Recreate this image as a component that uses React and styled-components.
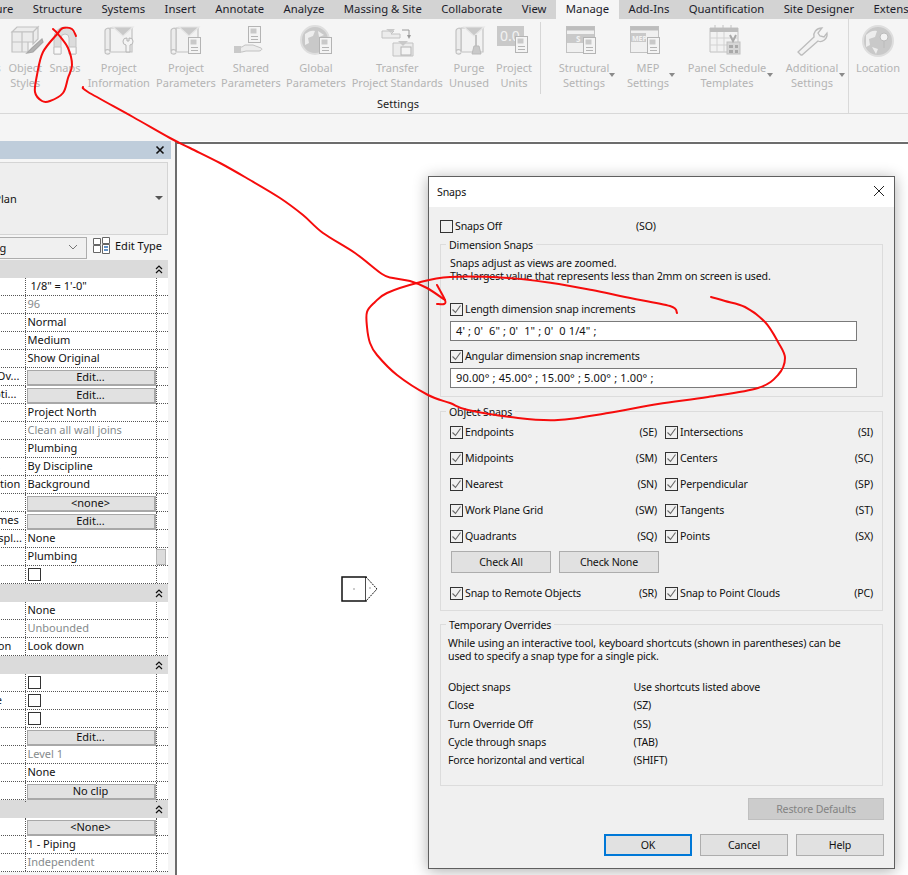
import React from 'react'
import styled, { createGlobalStyle } from 'styled-components'

const GlobalStyle = createGlobalStyle`
  html, body { margin: 0; padding: 0; background: #fff; }
  body {
    font-family: "Noto Sans", "Open Sans", sans-serif;
    font-size: 11px;
    color: #111;
  }
  * { box-sizing: border-box; }
`

const Page = styled.div`
  position: relative;
  width: 908px;
  height: 875px;
  overflow: hidden;
  display: flex;
  flex-direction: column;
`

/* ---------- tabs ---------- */
const TabBar = styled.div`
  height: 19px;
  flex: none;
  display: flex;
  background: #d3d3d3;
  margin-left: -61px;
  white-space: nowrap;
`
const Tab = styled.div`
  padding: 0 9.7px;
  line-height: 17px;
  font-size: 11.3px;
  color: #1c1c2a;
  background: ${(p) => (p.$active ? '#f5f5f5' : 'transparent')};
`

/* ---------- ribbon ---------- */
const Ribbon = styled.div`
  height: 95px;
  flex: none;
  display: flex;
  background: #f5f5f5;
  border-bottom: 1px solid #d8d8d8;
  margin-left: -51px;
`
const RibbonPanel = styled.div`
  width: ${(p) => p.$w}px;
  flex: none;
  display: flex;
  flex-direction: column;
  border-right: ${(p) => (p.$divider ? '1px solid #d9d9d9' : 'none')};
`
const ToolRow = styled.div`
  display: flex;
  height: 76px;
  padding-top: 6px;
`
const PanelTitle = styled.div`
  text-align: center;
  line-height: 14px;
  margin-top: 2px;
  padding-right: 1px;
  color: #222;
`
const Tool = styled.div`
  position: relative;
  width: ${(p) => p.$w}px;
  margin-left: ${(p) => p.$gap || 0}px;
  flex: none;
  display: flex;
  flex-direction: column;
  align-items: center;
  color: #b4b4b4;
  ${(p) => p.$menu && `
    &::after {
      content: '';
      position: absolute;
      right: 0;
      top: 48px;
      border: 3px solid transparent;
      border-top: 4px solid #8a8a8a;
      border-bottom: 0;
    }
  `}
`
const ToolIcon = styled.svg`
  width: 40px;
  height: 32px;
  flex: none;
`
const ToolLabel = styled.div`
  margin-top: 3px;
  line-height: 15px;
  text-align: center;
  white-space: pre-line;
`
const RibbonDivider = styled.div`
  width: 1px;
  height: 72px;
  margin: -3px ${(p) => p.$after}px 0 ${(p) => p.$before}px;
  background: #d6d6d6;
  flex: none;
`
const Band = styled.div`
  height: 27px;
  flex: none;
  background: #f5f5f5;
`

/* ---------- workspace ---------- */
const Workspace = styled.div`
  flex: 1;
  min-height: 0;
  display: flex;
`
const Side = styled.div`
  width: 175px;
  flex: none;
  overflow: hidden;
  background: #f5f5f5;
`
const SideInner = styled.div`
  width: 273px;
  margin-left: -102px;
`
const PanelHeader = styled.div`
  height: 18px;
  background: #bfcddb;
  display: flex;
  justify-content: flex-end;
  align-items: center;
  padding-right: 6px;
`
const TypeSelector = styled.div`
  height: 73px;
  margin: 3px 3px 0 0;
  background: #eeeeee;
  border: 1px solid #d4d4d4;
  display: flex;
  align-items: center;
  justify-content: space-between;
  padding: 0 4px 1px 66px;
  &::after {
    content: '';
    border: 4px solid transparent;
    border-top: 4px solid #555;
    border-bottom: 0;
  }
`
const FilterRow = styled.div`
  height: 25px;
  display: flex;
  align-items: center;
`
const FilterSelect = styled.div`
  width: 189px;
  height: 22px;
  padding: 0 8px 1px 17px;
  border: 1px solid #adadad;
  background: #f0f0f0;
  display: flex;
  align-items: center;
  justify-content: space-between;
  white-space: nowrap;
  overflow: hidden;
`
const EditType = styled.div`
  display: flex;
  align-items: center;
  gap: 5px;
  margin: -4px 0 0 6px;
  white-space: nowrap;
`
const SectionRow = styled.div`
  height: 18px;
  width: 270px;
  background: #dbdbdb;
  display: flex;
  justify-content: flex-end;
  align-items: center;
  padding-right: 5px;
`
const PropRow = styled.div`
  position: relative;
  height: 18px;
  width: 270px;
  display: grid;
  grid-template-columns: 126.5px 132px 1fr;
  background: #fff;
  border-bottom: 1px dotted #555;
`
const PropName = styled.div`
  overflow: hidden;
  white-space: nowrap;
  line-height: 15px;
  padding-left: 4px;
  color: ${(p) => (p.$link ? '#2a6fd0' : '#111')};
`
const PropValue = styled.div`
  display: flex;
  align-items: center;
  padding: 0 0 2px ${(p) => (p.$indent ? 5 : 2)}px;
  white-space: nowrap;
  border-left: 1px dotted #555;
  border-right: 1px dotted #555;
  color: ${(p) => (p.$muted ? '#868b8d' : '#111')};
`
const PropButton = styled.div`
  width: 130px;
  height: 16px;
  margin: 2px 0 0 -1px;
  background: #e1e1e1;
  border: 1px solid #a8a8a8;
  border-bottom-width: 2px;
  border-right-width: 2px;
  text-align: center;
  line-height: 11px;
  color: #111;
`
const PropCheck = styled.div`
  width: 13px;
  height: 13px;
  margin-top: 2px;
  border: 1px solid #333;
  background: #fff;
`
const ScrollThumb = styled.div`
  position: absolute;
  right: 2px;
  top: 1px;
  width: 10px;
  height: 16px;
  background: #dcdcdc;
  border: 1px solid #b4b4b4;
`
const Canvas = styled.div`
  position: relative;
  flex: 1;
  background: #fff;
  margin-top: 1px;
  border-top: 2px solid #6d6d6d;
  border-left: 2px solid #6d6d6d;
`

/* ---------- snaps dialog ---------- */
const Dialog = styled.div`
  position: absolute;
  left: 428px;
  top: 176px;
  width: 467px;
  height: 693px;
  background: #f0f0f0;
  border: 1px solid #5f5f5f;
  box-shadow: 0 2px 14px rgba(0, 0, 0, 0.32);
  font-size: 10.6px;
  letter-spacing: -0.16px;
`
const TitleBar = styled.div`
  height: 30px;
  background: #fff;
  display: flex;
  align-items: center;
  justify-content: space-between;
  padding: 0 9px 0 8px;
`
const CloseIcon = styled.svg`
  margin-top: -2px;
`
const DialogBody = styled.div`
  padding: 11px 10px 0 11px;
`
const Group = styled.div`
  position: relative;
  width: 443px;
  height: ${(p) => p.$h}px;
  margin-top: ${(p) => p.$mt}px;
  border: 1px solid #dcdcdc;
  padding: 12px 9px 0;
`
const Legend = styled.div`
  position: absolute;
  left: 5px;
  top: -7px;
  padding: 0 3px;
  line-height: 14px;
  background: #f0f0f0;
`
const Lines = styled.div`
  line-height: 13px;
  margin-left: ${(p) => p.$ml || 0}px;
`
const CheckRow = styled.div`
  display: flex;
  align-items: center;
  height: 16px;
  gap: 2px;
  margin-top: ${(p) => p.$mt || 0}px;
`
const CheckText = styled.span`
  width: ${(p) => (p.$w ? `${p.$w}px` : 'auto')};
  flex: none;
`
const Box = styled.span`
  width: 13px;
  height: 13px;
  flex: none;
  border: 1px solid #333;
  background: transparent;
  display: block;
`
const Shortcut = styled.span`
  margin-left: auto;
`
const TextInput = styled.div`
  width: 407px;
  height: 20px;
  margin-top: 4px;
  background: #fff;
  border: 1px solid #7a7a7a;
  padding-left: 5px;
  font-size: 11px;
  letter-spacing: 0.13px;
  line-height: 17px;
  white-space: pre;
`
const SnapGrid = styled.div`
  display: grid;
  grid-template-columns: 207px 208px;
  column-gap: 8px;
  row-gap: 10px;
`
const DlgButtons = styled.div`
  display: flex;
  gap: 8px;
  margin: 7px 0 12px 1px;
`
const DlgButton = styled.div`
  width: ${(p) => p.$w}px;
  height: 22px;
  padding-bottom: 1px;
  background: ${(p) => (p.$disabled ? '#cccccc' : '#e1e1e1')};
  border: ${(p) => (p.$primary ? '2px solid #0078d7' : p.$disabled ? '1px solid #bfbfbf' : '1px solid #adadad')};
  color: ${(p) => (p.$disabled ? '#838383' : '#111')};
  display: flex;
  align-items: center;
  justify-content: center;
`
const OverrideGrid = styled.div`
  display: grid;
  grid-template-columns: 185.5px 1fr;
  grid-auto-rows: 18.25px;
  align-items: center;
  margin: 15px 0 0 -2px;
`
const RestoreRow = styled.div`
  display: flex;
  justify-content: flex-end;
  margin: 12px 0 0;
`
const FooterRow = styled.div`
  display: flex;
  justify-content: flex-end;
  gap: 8px;
  margin-top: 14px;
`
const Markup = styled.svg`
  position: absolute;
  left: 0;
  top: 0;
  pointer-events: none;
`
const ViewTag = styled.svg`
  position: absolute;
  left: 164px;
  top: 432px;
`

/* ---------- ribbon icons ---------- */
const L = '#c2c2c2'
const F = '#ececec'
const D = '#c9c9c9'

const Card = ({ x, y }) => (
  <g transform={`translate(${x} ${y})`}>
    <rect x="0.5" y="0.5" width="12" height="16" fill="#f4f4f4" stroke="#b4b4b4" />
    <rect x="2.5" y="2.5" width="6" height="5" fill={D} />
    <path d="M3 10.5h7M3 13.5h7" stroke="#b4b4b4" />
  </g>
)
const Scroll = () => (
  <g fill="none" stroke={L} strokeWidth="1.2">
    <path d="M7 2h22v24H7z" fill="#f2f2f2" />
    <path d="M2 25V5c0-3 5-4 5-1v21c-1-2-5-2-5 1 0 2 3 3 5 1" fill={F} />
    <path d="M10 1h20l-10 9z" fill={D} stroke="#e6e6e6" />
  </g>
)
const icons = {
  styles: (
    <g stroke={L} strokeWidth="1.2" fill={F}>
      <path d="M7 7l5-5h21l-5 5zM28 7l5-5v12l-5 5z" />
      <path d="M7 7h10v10H7zM17 7h11v10H17zM7 17h10v10H7zM17 17h6v10h-6z" />
      <path d="M37 14L27 23l-5 5 6-1 10-10z" fill="#b4b4b4" stroke="#a8a8a8" />
    </g>
  ),
  magnet: (
    <g>
      <path d="M9 29V13a11 11 0 0 1 22 0v16h-7V13a4 4 0 0 0-8 0v16z" fill="#dcdcdc" stroke={L} />
      <path d="M9 22h7v7H9zM24 22h7v7h-7z" fill="#f8f8f8" stroke={L} />
    </g>
  ),
  info: (
    <g transform="translate(4 1)">
      <Scroll />
      <path d="M24 12a3.5 3.5 0 0 0-1 7v7h4v-7a3.5 3.5 0 0 0-1-7v3h-2z" fill="#f4f4f4" stroke="#b4b4b4" />
    </g>
  ),
  params: (
    <g transform="translate(3 1)">
      <Scroll />
      <Card x={19} y={11} />
    </g>
  ),
  shared: (
    <g>
      <Card x={17} y={1} />
      <path d="M6 22h5l3-2h8l8 3c2 1 0 3-2 3H15l-4 1H6z" fill={F} stroke={L} />
      <rect x="3" y="21" width="7" height="7" fill={D} />
    </g>
  ),
  globe: (
    <g>
      <circle cx="19" cy="15" r="14" fill={D} stroke="#dedede" strokeWidth="2" />
      <path d="M9 9c4-3 7-4 10-3l-2 5-5 2 1 5-4 2zM22 6l6 4-5 2z" fill="#eeeeee" />
      <Card x={23} y={12} />
    </g>
  ),
  transfer: (
    <g transform="translate(1 -1)">
      <path d="M4 7h12l-3 3h9v4H4z" fill={F} stroke={L} />
      <path d="M8 5h9l-4 4z" fill={D} />
      <path d="M24 6h7v7" fill="none" stroke="#9a9a9a" />
      <path d="M29 11l2 4 2-4z" fill="#9a9a9a" />
      <path d="M15 19h20v13H15z" fill={F} stroke={L} />
      <path d="M20 17h10l-5 5z" fill={D} />
      <rect x="23" y="23" width="10" height="8" fill="#f4f4f4" stroke="#b4b4b4" />
    </g>
  ),
  purge: (
    <g transform="translate(5 1)">
      <Scroll />
      <path d="M22 9v11" stroke="#b4b4b4" strokeWidth="1.5" />
      <path d="M18 28l2-8h5l2 8z" fill={D} stroke="#bbb" />
    </g>
  ),
  units: (
    <g>
      <rect x="3" y="1" width="27" height="20" fill={D} />
      <text x="6" y="16" fontSize="14" fill="#f2f2f2" fontFamily="Noto Sans, sans-serif">0.0</text>
      <Card x={21} y={11} />
    </g>
  ),
  structural: (
    <g transform="translate(1 0)">
      <rect x="1.5" y="1.5" width="28" height="26" fill="#f0f0f0" stroke={L} />
      <rect x="1.5" y="1.5" width="28" height="4" fill="#bdbdbd" />
      <rect x="2" y="9" width="27" height="9" fill={D} />
      <text x="11" y="17" fontSize="8" fontWeight="700" fill="#f2f2f2" fontFamily="Noto Sans, sans-serif">S</text>
      <Card x={18} y={12} />
    </g>
  ),
  mep: (
    <g transform="translate(1 0)">
      <rect x="1.5" y="1.5" width="28" height="26" fill="#f0f0f0" stroke={L} />
      <rect x="1.5" y="1.5" width="28" height="4" fill="#bdbdbd" />
      <rect x="2" y="8" width="15" height="9" fill={D} />
      <text x="3" y="15.5" fontSize="7" fontWeight="700" fill="#f2f2f2" fontFamily="Noto Sans, sans-serif">MEP</text>
      <Card x={18} y={12} />
    </g>
  ),
  panel: (
    <g transform="translate(1 0)">
      <path d="M7 0v4M15 0v4M23 0v4" stroke={L} />
      <path d="M2 3h28v24H2z" fill="#f2f2f2" stroke={L} />
      <path d="M2 3h28v4H2z" fill="#bdbdbd" />
      <path d="M2 13h28M2 20h28M9 7v20M16 7v20" stroke="#d2d2d2" fill="none" />
      <rect x="19" y="17" width="13" height="12" fill="#d6d6d6" stroke="#c0c0c0" />
      <path d="M21 20h4v3h-4zM27 20h3v3h-3zM21 25h4v3h-4zM27 25h3v3h-3z" fill="#a9a9a9" />
      <path d="M22 10l3 6 3-6" fill="none" stroke="#a9a9a9" strokeWidth="2" />
    </g>
  ),
  wrench: (
    <path
      d="M9 30l-3-3 16-15c-1-4 2-9 8-9l-4 5 2 3 4 1 3-4c1 6-5 10-9 8L10 30z"
      fill="#f2f2f2"
      stroke="#bcbcbc"
      strokeWidth="1.3"
    />
  ),
  location: (
    <g>
      <circle cx="20" cy="16" r="15" fill={D} stroke="#dedede" strokeWidth="2" />
      <path d="M8 10c4-4 8-5 11-4l-2 6-6 2 1 6-4 2zM14 22l6 2-2 5z" fill="#ededed" />
      <circle cx="26" cy="12" r="4" fill="#f2f2f2" stroke="#bbb" />
      <path d="M26 16v7" stroke="#bbb" />
    </g>
  ),
}

const toolsLeft = [
  { label: 'Materials', w: 55.5 },
  { label: 'Object\nStyles', w: 41.5, icon: 'styles' },
  { label: 'Snaps', w: 38, icon: 'magnet' },
  { label: 'Project\nInformation', w: 69.5, icon: 'info' },
  { label: 'Project\nParameters', w: 65, icon: 'params' },
  { label: 'Shared\nParameters', w: 65, icon: 'shared' },
  { label: 'Global\nParameters', w: 65, icon: 'globe' },
  { label: 'Transfer\nProject Standards', w: 97.5, icon: 'transfer' },
  { label: 'Purge\nUnused', w: 46, icon: 'purge' },
  { label: 'Project\nUnits', w: 44, icon: 'units' },
]
const toolsRight = [
  { label: 'Structural\nSettings', w: 62, icon: 'structural', menu: true },
  { label: 'MEP\nSettings', w: 54, icon: 'mep', menu: true, gap: 6 },
  { label: 'Panel Schedule\nTemplates', w: 92, icon: 'panel', menu: true, gap: 6 },
  { label: 'Additional\nSettings', w: 66, icon: 'wrench', menu: true, gap: 6 },
]

const RibbonTool = ({ tool }) => (
  <Tool $w={tool.w} $menu={tool.menu} $gap={tool.gap}>
    <ToolIcon viewBox="0 0 40 32">{tool.icon && icons[tool.icon]}</ToolIcon>
    <ToolLabel>{tool.label}</ToolLabel>
  </Tool>
)

/* ---------- properties data ---------- */
const propRows = [
  { name: 'View Scale', value: '1/8" = 1\'-0"', indent: true },
  { name: 'Scale Value 1:', value: '96', muted: true },
  { name: 'Display Model', value: 'Normal' },
  { name: 'Detail Level', value: 'Medium' },
  { name: 'Parts Visibility', value: 'Show Original' },
  { name: 'Visibility/Graphics Ov...', button: 'Edit...' },
  { name: 'Graphic Display Opti...', button: 'Edit...' },
  { name: 'Orientation', value: 'Project North' },
  { name: 'Wall Join Display', value: 'Clean all wall joins', muted: true },
  { name: 'Discipline', value: 'Plumbing' },
  { name: 'Show Hidden Lines', value: 'By Discipline', link: true },
  { name: 'Color Scheme Location', value: 'Background' },
  { name: 'Color Scheme', button: '<none>' },
  { name: 'System Color Schemes', button: 'Edit...' },
  { name: 'Default Analysis Displ...', value: 'None' },
  { name: 'Sub-Discipline', value: 'Plumbing', thumb: true },
  { name: 'Sun Path', check: true },
  { section: true },
  { name: 'Underlay', value: 'None' },
  { name: 'Range: Top Level', value: 'Unbounded', muted: true },
  { name: 'Underlay Orientation', value: 'Look down' },
  { section: true },
  { name: 'Crop View', check: true },
  { name: 'Crop Region Visible', check: true },
  { name: 'Annotation Crop', check: true },
  { name: 'View Range', button: 'Edit...' },
  { name: 'Associated Level', value: 'Level 1', muted: true },
  { name: 'Scope Box', value: 'None' },
  { name: 'Depth Clipping', button: 'No clip' },
  { section: true },
  { name: 'View Template', button: '<None>' },
  { name: 'View Name', value: '1 - Piping' },
  { name: 'Dependency', value: 'Independent', muted: true },
]

const snapRows = [
  ['Endpoints', '(SE)', 'Intersections', '(SI)'],
  ['Midpoints', '(SM)', 'Centers', '(SC)'],
  ['Nearest', '(SN)', 'Perpendicular', '(SP)'],
  ['Work Plane Grid', '(SW)', 'Tangents', '(ST)'],
  ['Quadrants', '(SQ)', 'Points', '(SX)'],
]

const overrides = [
  ['Object snaps', 'Use shortcuts listed above'],
  ['Close', '(SZ)'],
  ['Turn Override Off', '(SS)'],
  ['Cycle through snaps', '(TAB)'],
  ['Force horizontal and vertical', '(SHIFT)'],
]

const CheckMark = () => (
  <svg width="11" height="11" viewBox="0 0 11 11">
    <path d="M1.5 5.5l3 3 5-7" fill="none" stroke="#666" strokeWidth="1.1" />
  </svg>
)

const Check = ({ label, code, mt }) => (
  <CheckRow $mt={mt}>
    <Box><CheckMark /></Box>
    <CheckText>{label}</CheckText>
    {code && <Shortcut>{code}</Shortcut>}
  </CheckRow>
)

const Chevrons = () => (
  <svg width="8" height="9" viewBox="0 0 8 9">
    <path d="M1 4l3-3 3 3M1 8l3-3 3 3" fill="none" stroke="#111" strokeWidth="1.2" />
  </svg>
)

/* red pen marks, drawn as smooth curves through the sampled points */
const smooth = (pts) => {
  let d = `M${pts[0][0]} ${pts[0][1]}`
  for (let i = 0; i < pts.length - 1; i++) {
    const p0 = pts[i - 1] || pts[i]
    const p1 = pts[i]
    const p2 = pts[i + 1]
    const p3 = pts[i + 2] || p2
    const c1x = p1[0] + (p2[0] - p0[0]) / 6
    const c1y = p1[1] + (p2[1] - p0[1]) / 6
    const c2x = p2[0] - (p3[0] - p1[0]) / 6
    const c2y = p2[1] - (p3[1] - p1[1]) / 6
    d += `C${c1x.toFixed(1)} ${c1y.toFixed(1)} ${c2x.toFixed(1)} ${c2y.toFixed(1)} ${p2[0]} ${p2[1]}`
  }
  return d
}

const pen = [
  [[53, 29], [58, 34], [68, 48], [72, 65], [68, 78], [63, 93], [50, 101], [42, 101], [35, 92], [37, 75], [43, 52], [58, 33], [63, 28], [72, 29], [76, 36]],
  [[83, 87], [88, 92], [133, 117], [170, 138], [190, 148], [220, 163], [250, 180], [280, 198], [303, 215], [323, 233], [355, 253], [382, 274], [393, 278], [410, 281], [427, 288], [445, 300]],
  [[437, 285], [445, 300], [444, 304], [437, 304]],
  [[677, 313], [670, 306], [625, 297], [592, 290], [552, 283], [508, 278], [450, 277], [417, 283], [387, 293], [375, 302], [367, 312], [367, 327], [370, 343], [377, 355], [397, 375], [428, 395], [450, 403], [468, 410], [518, 418], [558, 420], [608, 413], [658, 404], [708, 397], [758, 388], [778, 375], [785, 358], [778, 342], [765, 322], [745, 307], [725, 301], [711, 297]],
]

export default function App() {
  return (
    <Page>
      <GlobalStyle />
      <TabBar>
        {['Architecture', 'Structure', 'Systems', 'Insert', 'Annotate', 'Analyze', 'Massing & Site', 'Collaborate', 'View'].map((t) => (
          <Tab key={t}>{t}</Tab>
        ))}
        <Tab $active>Manage</Tab>
        {['Add-Ins', 'Quantification', 'Site Designer', 'Extensions'].map((t) => (
          <Tab key={t}>{t}</Tab>
        ))}
      </TabBar>

      <Ribbon>
        <RibbonPanel $w={900} $divider>
          <ToolRow>
            {toolsLeft.map((t) => <RibbonTool key={t.label} tool={t} />)}
            <RibbonDivider $before={4} $after={12} />
            {toolsRight.map((t) => <RibbonTool key={t.label} tool={t} />)}
          </ToolRow>
          <PanelTitle>Settings</PanelTitle>
        </RibbonPanel>
        <RibbonPanel $w={58}>
          <ToolRow>
            <RibbonTool tool={{ label: 'Location', w: 58, icon: 'location' }} />
          </ToolRow>
        </RibbonPanel>
      </Ribbon>
      <Band />

      <Workspace>
        <Side>
          <SideInner>
            <PanelHeader>
              <svg width="10" height="10" viewBox="0 0 10 10">
                <path d="M1.5 1.5l7 7M8.5 1.5l-7 7" stroke="#111" strokeWidth="1.6" />
              </svg>
            </PanelHeader>
            <TypeSelector>Floor Plan</TypeSelector>
            <FilterRow>
              <FilterSelect>
                Floor Plan: Piping
                <svg width="10" height="6" viewBox="0 0 10 6">
                  <path d="M1 1l4 4 4-4" fill="none" stroke="#777" />
                </svg>
              </FilterSelect>
              <EditType>
                <svg width="17" height="17" viewBox="0 0 17 17">
                  <path d="M.5 1.5h7v6h-7zM.5 8.5h7v7h-7zM9.5.5h7v6h-7zM9.5 7.5h7v9h-7z" fill="#fff" stroke="#666" />
                  <path d="M11 10h4M11 13h4" stroke="#2f6fb5" strokeWidth="1.5" />
                </svg>
                Edit Type
              </EditType>
            </FilterRow>
            <SectionRow><Chevrons /></SectionRow>
            {propRows.map((row, i) =>
              row.section ? (
                <SectionRow key={i}><Chevrons /></SectionRow>
              ) : (
                <PropRow key={i}>
                  <PropName $link={row.link}>{row.name}</PropName>
                  <PropValue $muted={row.muted} $indent={row.indent}>
                    {row.value}
                    {row.button && <PropButton>{row.button}</PropButton>}
                    {row.check && <PropCheck />}
                  </PropValue>
                  <div />
                  {row.thumb && <ScrollThumb />}
                </PropRow>
              )
            )}
          </SideInner>
        </Side>
        <Canvas>
          <ViewTag width="38" height="26" viewBox="0 0 38 26">
            <path d="M1 1h24v24H1z" fill="#fff" stroke="#111" strokeWidth="1.5" />
            <path d="M25 1l11 12-11 12" fill="#fff" stroke="#111" strokeDasharray="2 1" />
            <path d="M12 13h2M28 12h2" stroke="#999" />
          </ViewTag>
        </Canvas>
      </Workspace>

      <Dialog>
        <TitleBar>
          <span>Snaps</span>
          <CloseIcon width="12" height="12" viewBox="0 0 12 12">
            <path d="M1 1l10 10M11 1L1 11" stroke="#222" strokeWidth="1" />
          </CloseIcon>
        </TitleBar>
        <DialogBody>
          <CheckRow>
            <Box />
            <CheckText $w={179}>Snaps Off</CheckText>
            <CheckText>(SO)</CheckText>
          </CheckRow>

          <Group $h={153} $mt={10}>
            <Legend>Dimension Snaps</Legend>
            <Lines>
              Snaps adjust as views are zoomed.<br />
              The largest value that represents less than 2mm on screen is used.
            </Lines>
            <Check mt={18} label="Length dimension snap increments" />
            <TextInput>{`4' ; 0'  6" ; 0'  1" ; 0'  0 1/4" ;`}</TextInput>
            <Check mt={7} label="Angular dimension snap increments" />
            <TextInput>90.00° ; 45.00° ; 15.00° ; 5.00° ; 1.00° ;</TextInput>
          </Group>

          <Group $h={200} $mt={14}>
            <Legend>Object Snaps</Legend>
            <SnapGrid>
              {snapRows.map((r) => (
                <React.Fragment key={r[0]}>
                  <Check label={r[0]} code={r[1]} />
                  <Check label={r[2]} code={r[3]} />
                </React.Fragment>
              ))}
            </SnapGrid>
            <DlgButtons>
              <DlgButton $w={100}>Check All</DlgButton>
              <DlgButton $w={100}>Check None</DlgButton>
            </DlgButtons>
            <SnapGrid>
              <Check label="Snap to Remote Objects" code="(SR)" />
              <Check label="Snap to Point Clouds" code="(PC)" />
            </SnapGrid>
          </Group>

          <Group $h={162} $mt={13}>
            <Legend>Temporary Overrides</Legend>
            <Lines $ml={-2}>
              While using an interactive tool, keyboard shortcuts (shown in parentheses) can be<br />
              used to specify a snap type for a single pick.
            </Lines>
            <OverrideGrid>
              {overrides.map((r) => (
                <React.Fragment key={r[0]}>
                  <span>{r[0]}</span>
                  <span>{r[1]}</span>
                </React.Fragment>
              ))}
            </OverrideGrid>
          </Group>

          <RestoreRow>
            <DlgButton $w={136} $disabled>Restore Defaults</DlgButton>
          </RestoreRow>
          <FooterRow>
            <DlgButton $w={88} $primary>OK</DlgButton>
            <DlgButton $w={88}>Cancel</DlgButton>
            <DlgButton $w={88}>Help</DlgButton>
          </FooterRow>
        </DialogBody>
      </Dialog>

      <Markup width="908" height="875" viewBox="0 0 908 875">
        {pen.map((pts, i) => (
          <path key={i} d={smooth(pts)} fill="none" stroke="#f60c0c" strokeWidth="2" strokeLinecap="round" strokeLinejoin="round" />
        ))}
      </Markup>
    </Page>
  )
}
